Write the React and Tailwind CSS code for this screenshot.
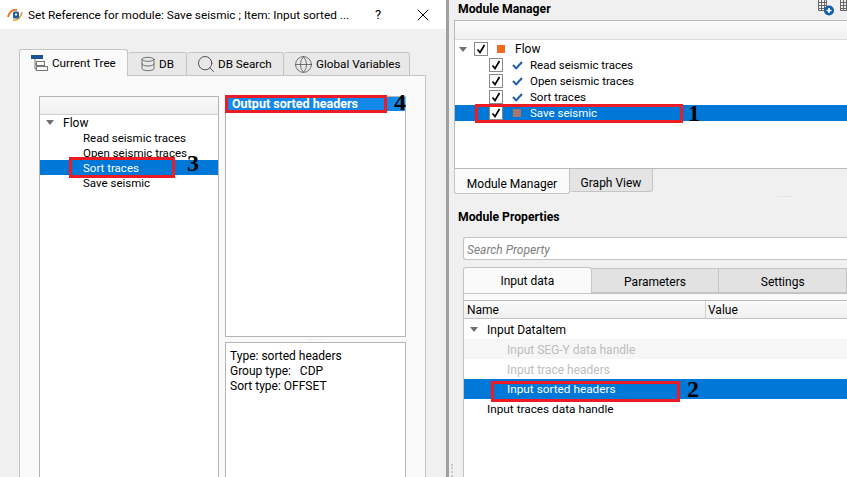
import { Database, Search, Globe, X } from 'lucide-react';

const BLUE = 'bg-[#0078d7]';

function T({ children }) {
  return <span className="pt-[2px]">{children}</span>;
}

function Caret() {
  return <span className="w-0 h-0 border-l-[4px] border-r-[4px] border-t-[5px] border-l-transparent border-r-transparent border-t-[#707070]" />;
}

function CheckBox() {
  return (
    <span className="w-[14px] h-[14px] border border-[#8a8a8a] bg-white flex items-center justify-center shrink-0">
      <svg width="10" height="10" viewBox="0 0 10 10"><path d="M1.5 5.5 L4 8.5 L8.5 1" fill="none" stroke="#000" strokeWidth="1.7" /></svg>
    </span>
  );
}

function BlueCheck() {
  return <svg width="11" height="9" viewBox="0 0 11 9" className="shrink-0"><path d="M1 4 L4.2 7.4 L10 1" fill="none" stroke="#1a5fa8" strokeWidth="2" /></svg>;
}

function Logo() {
  return (
    <svg width="16" height="12" viewBox="0 0 16 12" className="shrink-0">
      <path d="M1 8 C2 3 6 0 10 1" fill="none" stroke="#e8772e" strokeWidth="2" />
      <path d="M6 11 C10 12 14 9 15 3" fill="none" stroke="#e8a33e" strokeWidth="1.6" />
      <rect x="6" y="2.5" width="6" height="7" rx="1.5" fill="#1d5f9e" />
      <rect x="8" y="4.5" width="2" height="2" fill="#fff" />
    </svg>
  );
}

function TreeIcon() {
  return (
    <svg width="17" height="17" viewBox="0 0 17 17" className="shrink-0">
      <rect x="0" y="0" width="12" height="4" fill="#1a5296" />
      <path d="M4 4 V14 M4 9 H6 M4 14 H6" stroke="#777" fill="none" />
      <rect x="5.5" y="6.5" width="8" height="4" fill="none" stroke="#777" />
      <rect x="5.5" y="11.5" width="11" height="4" fill="none" stroke="#777" />
    </svg>
  );
}

function TableIcon({ children }) {
  return (
    <svg width="16" height="16" viewBox="0 0 16 16" className="shrink-0">
      <path d="M0.5 0 V10.5 H8.5 V0 M0.5 2.5 H8.5 M0.5 5.5 H8.5 M0.5 8.5 H8.5 M3.5 0 V10.5 M6.5 0 V10.5" fill="none" stroke="#666" />
      {children}
    </svg>
  );
}

function Marker({ className, num, numClass }) {
  return (
    <>
      <div className={`absolute border-[3px] border-[#ed1c24] ${className}`} />
      <span className={`absolute font-['Liberation_Serif',serif] font-bold text-[24px] leading-none text-black ${numClass}`}>{num}</span>
    </>
  );
}

function DialogTab({ children, active, className }) {
  return (
    <div className={`flex items-center text-[11.7px] border border-[#c4c4c4] rounded-t-[3px] ${active ? 'bg-[#fafafa] border-b-0 h-[27px] mt-[-2px] z-10 mb-[-1px]' : 'bg-[#e8e8e8] h-[24px] mt-[1px] border-l-0'} ${className}`}>
      {children}
    </div>
  );
}

function SetReferenceDialog() {
  return (
    <div className="w-[446px] h-full flex flex-col shrink-0 bg-[#f0f0f0]">
      <div className="h-[29px] bg-white flex items-center pl-[7px] shrink-0">
        <Logo />
        <span className="ml-[5px] w-[334px] whitespace-nowrap text-[11.8px] pt-[2px]">Set Reference for module: Save seismic ; Item: Input sorted ...</span>
        <span className="ml-[13px] w-[38px] text-[13px]">?</span>
        <X size={20} strokeWidth={1.2} />
      </div>

      <div className="flex-1 pt-[22px] pl-[19px] pr-[20px] flex flex-col min-h-0">
        <div className="flex h-[24px] shrink-0 items-start">
          <DialogTab active className="w-[109px] pl-[11px] gap-[4px]">
            <TreeIcon />
            <T>Current Tree</T>
          </DialogTab>
          <DialogTab className="w-[59px] pl-[12px] gap-[3px]">
            <Database size={16} strokeWidth={1.2} className="text-[#555]" />
            <T>DB</T>
          </DialogTab>
          <DialogTab className="w-[97px] pl-[9px] gap-[2px]">
            <Search size={20} strokeWidth={1.1} className="text-[#444]" />
            <T>DB Search</T>
          </DialogTab>
          <DialogTab className="w-[126px] pl-[10px] gap-[3px]">
            <Globe size={19} strokeWidth={0.9} className="text-[#444]" />
            <T>Global Variables</T>
          </DialogTab>
        </div>

        <div className="flex-1 border border-[#c4c4c4] border-b-0 bg-[#fafafa] pt-[20px] pl-[19px] flex gap-[6px] min-h-0">
          <div className="w-[180px] border border-[#b4b4b4] border-b-0 bg-white flex flex-col">
            <div className="h-[18px] bg-gradient-to-b from-[#fafafa] to-[#f0f0f0] border-b border-[#cfcfcf]" />
            <div className="leading-[17px] text-[11.5px]">
              <div className="h-[15px] flex items-center pl-[6px] gap-[9px] text-[12px]"><Caret /><T>Flow</T></div>
              <div className="h-[15px] pl-[43px]">Read seismic traces</div>
              <div className="h-[15px] pl-[43px]">Open seismic traces</div>
              <div className={`h-[15px] pl-[43px] text-white ${BLUE}`}>Sort traces</div>
              <div className="h-[15px] pl-[43px]">Save seismic</div>
            </div>
          </div>

          <div className="w-[181px] flex flex-col">
            <div className="h-[241px] border border-[#b4b4b4] bg-white shrink-0">
              <div className="h-[14px] bg-[#1488e8] text-white font-bold text-[12.5px] pl-[6px] leading-[14px]">Output sorted headers</div>
            </div>
            <div className="h-[5px] flex items-center justify-center text-[#bbb] text-[8px] leading-none tracking-[1px]">·····</div>
            <div className="flex-1 border border-[#b4b4b4] border-b-0 bg-white pl-[4px] pt-[6px] leading-[15px]">
              <div>Type: sorted headers</div>
              <div className="whitespace-pre">Group type:   CDP</div>
              <div>Sort type: OFFSET</div>
            </div>
          </div>
        </div>
      </div>
    </div>
  );
}

function ManagerRow({ children, selected }) {
  return (
    <div className={`h-[16px] flex items-center pl-[34px] ${selected ? `${BLUE} text-white` : ''}`}>
      <CheckBox />
      {children}
    </div>
  );
}

function ModuleManager() {
  return (
    <div className="flex-1 min-w-0 h-full flex flex-col bg-[#f0f0f0]">
      <div className="h-[20px] flex items-start pl-[9px] shrink-0">
        <span className="font-bold text-[12.2px] leading-[18px]">Module Manager</span>
        <div className="ml-auto flex gap-[6px] w-[29px] overflow-hidden">
          <TableIcon>
            <circle cx="11" cy="10.5" r="5" fill="#0f5ca8" />
            <path d="M8.5 10.5 H13.5 M11 8 V13" stroke="#fff" strokeWidth="1.6" />
          </TableIcon>
          <TableIcon>
            <circle cx="11" cy="10.5" r="4" fill="#ee7c22" />
          </TableIcon>
        </div>
      </div>

      <div className="ml-[5px] h-[149px] border border-[#b9b9b9] border-r-0 bg-white shrink-0 flex flex-col">
        <div className="h-[19px] bg-gradient-to-b from-[#fafafa] to-[#f0f0f0] border-b border-[#dadada] shrink-0" />
        <div className="mt-[1px] text-[11.5px]">
          <div className="h-[16px] flex items-center pl-[4px] text-[12px]">
            <Caret />
            <span className="ml-[7px]"><CheckBox /></span>
            <span className="ml-[9px] w-[8px] h-[8px] bg-[#ee6c22]" />
            <span className="ml-[10px]">Flow</span>
          </div>
          <ManagerRow><span className="ml-[9px] mr-[7px]"><BlueCheck /></span><T>Read seismic traces</T></ManagerRow>
          <ManagerRow><span className="ml-[9px] mr-[7px]"><BlueCheck /></span><T>Open seismic traces</T></ManagerRow>
          <ManagerRow><span className="ml-[9px] mr-[7px]"><BlueCheck /></span><T>Sort traces</T></ManagerRow>
          <ManagerRow selected><span className="ml-[10px] mr-[9px] w-[8px] h-[8px] bg-[#a9786a]" /><T>Save seismic</T></ManagerRow>
        </div>
      </div>

      <div className="ml-[5px] flex h-[25px] shrink-0 items-start">
        <div className="w-[116px] h-[25px] bg-[#fafafa] border border-[#c4c4c4] border-t-0 rounded-b-[3px] flex items-center justify-center pt-[6px]">Module Manager</div>
        <div className="w-[83px] h-[23px] bg-[#e4e4e4] border border-[#c4c4c4] border-t-0 border-l-0 rounded-b-[3px] flex items-center justify-center pt-[6px]">Graph View</div>
      </div>

      <div className="h-[5px] pl-[328px] text-[#bbb] text-[8px] leading-[5px] tracking-[1px] shrink-0">·····</div>
      <div className="pl-[9px] mt-[10px] font-bold text-[12.2px] leading-[16px] shrink-0">Module Properties</div>

      <div className="ml-[14px] mt-[12px] h-[23px] border border-[#c4c4c4] border-r-0 rounded-l-[3px] bg-white flex items-center pl-[3px] pt-[2px] italic text-[#808080] shrink-0">Search Property</div>

      <div className="ml-[14px] mt-[7px] flex h-[26px] shrink-0 items-end">
        <div className="w-[129px] h-[26px] bg-[#fafafa] border border-[#c4c4c4] border-b-0 rounded-t-[3px] flex items-center justify-center z-10">Input data</div>
        <div className="w-[128px] h-[25px] bg-[#e2e2e2] border border-[#c4c4c4] border-l-0 flex items-center justify-center pt-[2px]">Parameters</div>
        <div className="w-[128px] h-[25px] bg-[#e2e2e2] border border-[#c4c4c4] border-l-0 flex items-center justify-center pt-[2px]">Settings</div>
      </div>

      <div className="flex-1 ml-[14px] bg-[#fafafa] pt-[6px] border-t border-l border-[#c4c4c4] min-h-0 flex flex-col">
        <div className="flex-1 border-t border-[#b9b9b9] bg-white flex flex-col">
          <div className="h-[18px] bg-gradient-to-b from-[#fafafa] to-[#f0f0f0] border-b border-[#c4c4c4] flex shrink-0 leading-[19px]">
            <span className="w-[242px] pl-[3px] border-r border-[#d0d0d0]">Name</span>
            <span className="pl-[2px]">Value</span>
          </div>
          <div className="h-[20px] flex items-center pl-[6px] gap-[9px]"><Caret /><T>Input DataItem</T></div>
          <div className="h-[20px] flex items-center pl-[43px] pt-[2px] text-[#bdbdbd] bg-[#f6f6f6]">Input SEG-Y data handle</div>
          <div className="h-[20px] flex items-center pl-[43px] pt-[2px] text-[#bdbdbd]">Input trace headers</div>
          <div className={`h-[20px] flex items-center pl-[43px] pt-[2px] text-[11.8px] text-white ${BLUE}`}>Input sorted headers</div>
          <div className="h-[20px] flex items-center pl-[23px] pt-[2px] text-[11.8px]">Input traces data handle</div>
        </div>
      </div>
    </div>
  );
}

export default function App() {
  return (
    <div className="relative w-[847px] h-[477px] overflow-hidden flex bg-[#f0f0f0] text-black text-[12px] font-['Roboto',sans-serif]">
      <SetReferenceDialog />
      <div className="w-[3px] h-full bg-[#a0a0a0] shrink-0" />
      <ModuleManager />

      <div className="absolute left-[451px] top-[464px] h-[13px] border-l-2 border-dotted border-[#c8c8c8]" />
      <Marker className="left-[475px] top-[104px] w-[208px] h-[19px]" num="1" numClass="left-[688px] top-[101px]" />
      <Marker className="left-[491px] top-[381px] w-[189px] h-[21px]" num="2" numClass="left-[687px] top-[377px]" />
      <Marker className="left-[69px] top-[157px] w-[106px] h-[21px]" num="3" numClass="left-[187px] top-[151px]" />
      <Marker className="left-[225px] top-[95px] w-[162px] h-[18px]" num="4" numClass="left-[394px] top-[90px]" />
    </div>
  );
}
